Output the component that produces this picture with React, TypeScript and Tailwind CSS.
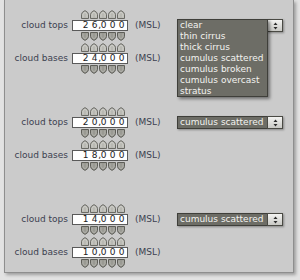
import type { ReactNode } from 'react'

const OPTIONS = [
  'clear',
  'thin cirrus',
  'thick cirrus',
  'cumulus scattered',
  'cumulus broken',
  'cumulus overcast',
  'stratus',
]

const GROUPS = [
  { tops: '26000', bases: '24000', open: true },
  { tops: '20000', bases: '18000', open: false },
  { tops: '14000', bases: '10000', open: false },
]

function ArrowUp() {
  return (
    <svg width="8" height="9" viewBox="0 0 8 9">
      <path d="M0.5 8.5V4.3Q0.5 2.3 4 0.6Q7.5 2.3 7.5 4.3V8.5Z" fill="#b9b9b3" stroke="#6a6a64" strokeWidth="1" />
      <path d="M2 7.5V4.6Q2 3.4 4 2.3Q6 3.4 6 4.6V7.5" fill="none" stroke="#d6d6d0" strokeWidth="0.8" />
    </svg>
  )
}

function ArrowDown() {
  return (
    <svg width="8" height="9" viewBox="0 0 8 9">
      <path d="M0.5 0.5V4.7Q0.5 6.7 4 8.4Q7.5 6.7 7.5 4.7V0.5Z" fill="#9a9a93" stroke="#5e5e58" strokeWidth="1" />
      <path d="M2 1.5V4.4Q2 5.6 4 6.7Q6 5.6 6 4.4V1.5" fill="none" stroke="#b8b8b2" strokeWidth="0.8" />
    </svg>
  )
}

function ArrowRow({ down }: { down?: boolean }) {
  return (
    <div className={`flex gap-[1px] ml-[75px] h-[10px] ${down ? 'items-start' : 'items-end'}`}>
      {[0, 1, 2, 3, 4].map(i => (down ? <ArrowDown key={i} /> : <ArrowUp key={i} />))}
    </div>
  )
}

function UpDown() {
  return (
    <svg width="5" height="8" viewBox="0 0 5 8">
      <path d="M2.5 0.5L4.5 3H0.5Z" fill="#2a2a2a" />
      <path d="M2.5 7.5L4.5 5H0.5Z" fill="#2a2a2a" />
    </svg>
  )
}

function SelectButton() {
  return (
    <div className="w-[16px] h-[13px] flex items-center justify-center bg-gradient-to-b from-[#f4f4f2] to-[#c9c9c5] border border-[#4a4a44]">
      <UpDown />
    </div>
  )
}

function Select({ open }: { open: boolean }) {
  if (open) {
    return (
      <div className="relative w-[106px] h-[13px]">
        <div className="absolute left-0 top-0 w-[91px] h-[78px] bg-[#6d6d66] border border-[#3f3f3a] shadow-[2px_2px_3px_rgba(0,0,0,0.45)] pl-[2px] z-10">
          {OPTIONS.map(o => (
            <div key={o} className="h-[11px] leading-[11px] text-[#f3f3f0]">{o}</div>
          ))}
        </div>
        <div className="absolute left-[90px] top-0 shadow-[1px_1px_2px_rgba(0,0,0,0.35)]">
          <SelectButton />
        </div>
      </div>
    )
  }
  return (
    <div className="flex w-[106px] h-[13px] shadow-[1px_1px_2px_rgba(0,0,0,0.35)]">
      <div className="w-[91px] h-[13px] bg-[#6d6d66] border border-r-0 border-[#3f3f3a] pl-[2px] leading-[11px] text-[#f3f3f0]">
        cumulus scattered
      </div>
      <SelectButton />
    </div>
  )
}

function Field({ label, value, children }: { label: string; value: string; children?: ReactNode }) {
  const digits = value.split('')
  return (
    <div className="flex flex-col">
      <ArrowRow />
      <div className="flex items-center h-[13px]">
        <div className="w-[62px] text-right text-[#3b4150]">{label}</div>
        <div className="ml-[4px] w-[56px] h-[11px] bg-white border border-[#5a5a5a] flex items-center pl-[8px] text-[#222]">
          {digits.map((d, i) => (
            <span key={i} className="relative w-[9px] text-center leading-[9px]">
              {d}
              {i === 1 && <span className="absolute -right-[2px] top-0">,</span>}
            </span>
          ))}
        </div>
        <div className="ml-[7px] w-[42px] text-[#3b4150]">(MSL)</div>
        {children}
      </div>
      <ArrowRow down />
    </div>
  )
}

export default function App() {
  return (
    <div className="w-[300px] h-[280px] bg-[#e2e2e2] overflow-hidden font-['DejaVu_Sans',sans-serif] text-[9px]">
      <div className="ml-[4px] w-[290px] h-[273px] bg-[#cbcbcb] border-l border-r border-b border-[#8e8e8e] shadow-[2px_2px_3px_rgba(0,0,0,0.3)] pt-[9px] pl-[1px] flex flex-col gap-[31px]">
        {GROUPS.map((g, i) => (
          <div key={i} className="flex flex-col">
            <Field label="cloud tops" value={g.tops}>
              <Select open={g.open} />
            </Field>
            <Field label="cloud bases" value={g.bases} />
          </div>
        ))}
      </div>
    </div>
  )
}
